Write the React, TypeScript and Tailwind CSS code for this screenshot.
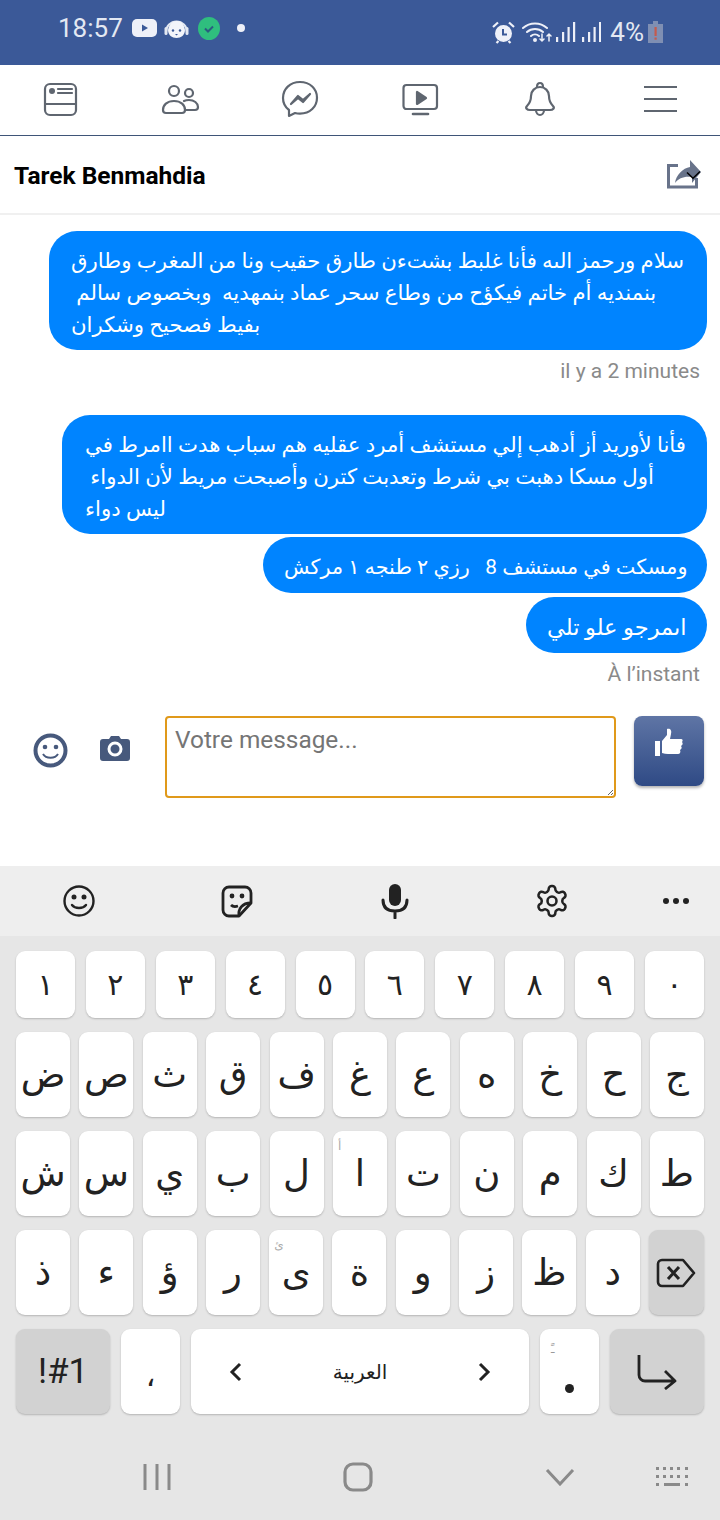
import { ReactNode } from "react";

const row1 = ["١", "٢", "٣", "٤", "٥", "٦", "٧", "٨", "٩", "٠"];
const row2 = ["ض", "ص", "ث", "ق", "ف", "غ", "ع", "ه", "خ", "ح", "ج"];
const row3 = ["ش", "س", "ي", "ب", "ل", "ا", "ت", "ن", "م", "ك", "ط"];
const row4 = ["ذ", "ء", "ؤ", "ر", "ى", "ة", "و", "ز", "ظ", "د"];

const hints: Record<string, string> = { "ا": "أ", "ى": "ئ" };

function Key({ label }: { label: string }) {
  return (
    <div className="relative flex h-[85px] w-[54px] items-center justify-center rounded-[9px] bg-white text-[37px] leading-none text-[#222] shadow-[0_1px_2px_rgba(0,0,0,0.22)]">
      {hints[label] && <span className="absolute left-[5px] top-[9px] text-[12px] text-[#aaa]">{hints[label]}</span>}
      {label}
    </div>
  );
}

function Bubble({ lines, className }: { lines: string[]; className: string }) {
  return (
    <div className={`flex flex-col justify-center rounded-[28px] bg-[#0084ff] pt-[4px] leading-[32px] text-white ${className}`}>
      {lines.map((l, i) => (
        <div key={i} dir="rtl" className="w-fit whitespace-pre">
          {l}
        </div>
      ))}
    </div>
  );
}

function NavIcon({ children }: { children: ReactNode }) {
  return (
    <svg width="40" height="40" viewBox="0 0 40 40" fill="none" stroke="#5f6670" strokeWidth="2.200" strokeLinecap="round" strokeLinejoin="round">
      {children}
    </svg>
  );
}

export default function App() {
  return (
    <div className="flex h-[1520px] w-[720px] flex-col overflow-hidden bg-white font-['Roboto','DejaVu_Sans',sans-serif]">
      {/* status bar */}
      <div className="flex h-[65px] shrink-0 items-start bg-[#3b5998] pl-[58px] pr-[57px] pt-[12px] text-[#e3e8f2]">
        <span className="text-[26px] leading-[32px]">18:57</span>
        <div className="ml-[9px] mt-[4px] flex items-center">
          <svg width="25" height="24" viewBox="0 0 25 24">
            <rect x="0" y="3" width="25" height="18" rx="5" fill="#eef0f8" />
            <path d="M10 8.500v7l6-3.500z" fill="#3b5998" />
          </svg>
          <svg className="ml-[7px]" width="25" height="24" viewBox="0 0 25 24">
            <path d="M2 16A10.500 10.500 0 0 1 23 16" fill="none" stroke="#e3e8f2" strokeWidth="2" />
            <path d="M4 14c1-6 5-9 9-9s7 3 8 9c0 5-4 8-8.500 8S4 19 4 14z" fill="#f2f4fa" />
            <rect x="0.500" y="11" width="3" height="8" rx="1.500" fill="#e3e8f2" />
            <rect x="21.500" y="11" width="3" height="8" rx="1.500" fill="#e3e8f2" />
            <circle cx="9" cy="14.500" r="1.200" fill="#3b5998" />
            <circle cx="16" cy="14.500" r="1.200" fill="#3b5998" />
            <path d="M11 18h3l-1.500 1.500z" fill="#3b5998" />
          </svg>
          <svg className="ml-[9px]" width="22" height="23" viewBox="0 0 22 23">
            <ellipse cx="11" cy="11.500" rx="11" ry="11.500" fill="#2fbe7e" />
            <path d="M7 11.500l3 3 5-5" fill="none" stroke="#2a5c80" strokeWidth="2" />
          </svg>
          <span className="ml-[17px] h-[8px] w-[8px] rounded-full bg-[#eef0f8]" />
        </div>
        <div className="ml-auto mt-[4px] flex items-center">
          <svg width="23" height="23" viewBox="0 0 23 23">
            <circle cx="11.500" cy="12.500" r="8.500" fill="#eef0f8" />
            <path d="M11 8v5.500h4" fill="none" stroke="#3b5998" strokeWidth="2" />
            <path d="M1 6l5-4.500M22 6l-5-4.500M4.500 22l2-2M18.500 22l-2-2" stroke="#eef0f8" strokeWidth="2.200" />
          </svg>
          <svg className="ml-[7px]" width="30" height="22" viewBox="0 0 30 22" fill="none" stroke="#eef0f8" strokeWidth="2" strokeLinecap="round">
            <path d="M1 7a18 18 0 0 1 24 0M5 11a12 12 0 0 1 16 0M9 15a6 6 0 0 1 8 0" />
            <circle cx="13" cy="19" r="1" />
            <path d="M20 13v7M18 18l2 2 2-2M27 20v-7M25 15l2-2 2 2" strokeWidth="1.500" />
          </svg>
          <svg className="ml-[4px]" width="45" height="22" viewBox="0 0 45 22" fill="#eef0f8">
            <rect x="0" y="16" width="2.200" height="5" />
            <rect x="6" y="11" width="2.200" height="10" />
            <rect x="11.500" y="6" width="2.200" height="15" />
            <rect x="17" y="1" width="2.200" height="20" />
            <rect x="26" y="16" width="2.200" height="5" />
            <rect x="32" y="11" width="2.200" height="10" />
            <rect x="37.500" y="6" width="2.200" height="15" />
            <rect x="43" y="1" width="2.200" height="20" />
          </svg>
          <span className="ml-[9px] text-[26px] leading-[32px]">4%</span>
          <svg className="ml-[4px]" width="15" height="22" viewBox="0 0 15 22">
            <path d="M5 0h5v3h5v19H0V3h5z" fill="#7f8fb3" />
            <rect x="6.500" y="6" width="2.200" height="9" fill="#c55a4d" />
            <rect x="6.500" y="16.500" width="2.200" height="2.200" fill="#c55a4d" />
          </svg>
        </div>
      </div>

      {/* facebook nav */}
      <div className="flex h-[71px] shrink-0 items-center justify-between border-b border-[#3f5578] pb-[1px] pl-[40px] pr-[40px]">
        <NavIcon>
          <rect x="5" y="4" width="31" height="31" rx="5" />
          <path d="M5 24h31" />
          <circle cx="12" cy="11" r="3" fill="#5f6670" stroke="none" />
          <path d="M18 9h14M18 13h14" />
        </NavIcon>
        <NavIcon>
          <circle cx="14" cy="11" r="5" />
          <circle cx="29" cy="13" r="4" />
          <path d="M6 33a3 3 0 0 1-3-3c0-5 4-9 11-9s11 4 11 9a3 3 0 0 1-3 3z" />
          <path d="M24 21c2-1 4-1 5-1 5 0 9 3 9 7 0 2-1 3-3 3h-9" />
        </NavIcon>
        <NavIcon>
          <path d="M20 2C10 2 3 9 3 18c0 5 2 9 6 12v6l6-3c1.500 .5 3 .7 5 .7 10 0 17-7 17-16S30 2 20 2z" />
          <path d="M11 24l7-8 5 4 7-6-7 8-5-4z" fill="#5f6670" />
        </NavIcon>
        <NavIcon>
          <rect x="3.500" y="5" width="33.500" height="24" rx="3" />
          <path d="M17 12v12l9-6z" fill="#5f6670" />
          <path d="M13 34h15" strokeWidth="2.600" />
        </NavIcon>
        <NavIcon>
          <path d="M10 30c-3 0-5-2-3-4 3-3 4-6 4-10 0-5 4-9 9-9s9 4 9 9c0 4 1 7 4 10 2 2 0 4-3 4z" />
          <path d="M17 7c0-2 1-4 3-4s3 2 3 4M16 30c0 3 2 5 4 5s4-2 4-5" />
        </NavIcon>
        <NavIcon>
          <path d="M4 7h33M4 19h33M4 31h33" strokeLinecap="butt" />
        </NavIcon>
      </div>

      {/* conversation header */}
      <div className="flex h-[79px] shrink-0 items-center justify-between border-b-2 border-[#f0f0f0] pl-[14px] pr-[18px]">
        <span className="pt-[3px] text-[24.500px] font-bold leading-none text-black">Tarek Benmahdia</span>
        <svg width="36" height="32" viewBox="0 0 36 32">
          <path d="M12 6.500H2.500v21.500h28V19" fill="none" stroke="#68738a" strokeWidth="3" />
          <path d="M24 1l11 12-9 11v-6c-8-1-13 1-17 6 1-8 8-15 15-16z" fill="#68738a" />
          <path d="M21 13.500l6 5.800 7-6.800" fill="none" stroke="#000" strokeWidth="1.500" />
        </svg>
      </div>

      {/* messages */}
      <div className="flex flex-col items-end pr-[13px] pt-[16px]">
        <Bubble
          className="h-[119px] w-[658px] pl-[22px] text-[21.250px]"
          lines={[
            "سلام ورحمز الىه فأنا غلبط بشتءن طارق حقيب ونا من المغرب وطارق",
            " بنمنديه أم خاتم فيكؤح من وطاع سحر عماد بنمهديه  وبخصوص سالم ",
            "بفيط فصحيح وشكران",
          ]}
        />
        <span className="mr-[7px] mt-[9px] text-[21px] leading-[24px] text-[#8a8a8a]">il y a 2 minutes</span>
        <Bubble
          className="mt-[32px] h-[119px] w-[645px] pl-[23px] text-[21.250px]"
          lines={[
            "فأنا لأوريد أز أدهب إلي مستشف أمرد عقليه هم سباب هدت اامرط في",
            " أول مسكا دهبت بي شرط وتعدبت كترن وأصبحت مريط لأن الدواء ",
            "ليس دواء",
          ]}
        />
        <Bubble className="mt-[3px] h-[56px] w-[444px] pl-[21px] text-[20.800px]" lines={["ومسكت في مستشف 8   رزي ٢ طنجه ١ مركش"]} />
        <Bubble className="mt-[4px] h-[56px] w-[181px] pl-[21px] text-[22.500px]" lines={["اىمرجو علو تلي"]} />
        <span className="mr-[7px] mt-[9px] text-[21px] leading-[24px] text-[#8a8a8a]">À l’instant</span>
      </div>

      {/* composer */}
      <div className="mt-[30px] flex items-start pl-[33px]">
        <svg className="mt-[17px]" width="35" height="35" viewBox="0 0 35 35">
          <circle cx="17.500" cy="17.500" r="15" fill="#fff" stroke="#47597c" strokeWidth="4" />
          <circle cx="12" cy="14" r="2.300" fill="#47597c" />
          <circle cx="23" cy="14" r="2.300" fill="#47597c" />
          <path d="M10 21c3 5 12 5 15 0" fill="none" stroke="#47597c" strokeWidth="2" />
        </svg>
        <svg className="ml-[32px] mt-[20px]" width="30" height="25" viewBox="0 0 30 25">
          <path d="M3 3h6l2-3h8l2 3h6a3 3 0 0 1 3 3v16a3 3 0 0 1-3 3H3a3 3 0 0 1-3-3V6a3 3 0 0 1 3-3z" fill="#47597c" />
          <circle cx="15" cy="13" r="6" fill="none" stroke="#fff" strokeWidth="3" />
        </svg>
        <div className="relative ml-[35px] h-[82px] w-[451px] rounded-[4px] border-2 border-[#e0991a] px-[8px] py-[6px] text-[24.400px] leading-[32px] text-[#757575]">
          Votre message...
          <svg className="absolute bottom-0 right-0" width="7" height="7" viewBox="0 0 7 7" stroke="#666" strokeWidth="1">
            <path d="M1 6l5-5M4 6l2-2" />
          </svg>
        </div>
        <div className="ml-[18px] h-[70px] w-[70px] rounded-[8px] bg-gradient-to-b from-[#5f75a5] to-[#2f4a85] pl-[21px] pt-[12px] shadow-[0_2px_3px_rgba(0,0,0,0.3)]">
          <svg width="28" height="29" viewBox="0 0 28 29" fill="#fff">
            <rect x="0" y="13" width="5" height="15" />
            <path d="M7 13l5-6V1c3-1 5 1 4 5l-1 5h11c2 0 2 2 1 3 1 1 1 3-1 4 1 1 1 3-1 4 1 2 0 4-2 4H13c-2 0-4-.5-6-1z" />
          </svg>
        </div>
      </div>

      {/* keyboard */}
      <div className="mt-auto flex shrink-0 flex-col bg-[#e6e6e6]">
        <div className="flex h-[70px] items-center bg-[#eeeeee] pl-[62px]">
          <svg width="34" height="34" viewBox="0 0 34 34" fill="none" stroke="#222" strokeWidth="2.400">
            <circle cx="17" cy="17" r="14.500" />
            <circle cx="12" cy="13" r="1.300" fill="#222" />
            <circle cx="22" cy="13" r="1.300" fill="#222" />
            <path d="M10 21c3 4 11 4 14 0" strokeLinecap="round" />
          </svg>
          <svg className="ml-[124px]" width="34" height="34" viewBox="0 0 34 34" fill="none" stroke="#222" strokeWidth="2.800" strokeLinejoin="round">
            <path d="M19 32H9a6 6 0 0 1-6-6V9a6 6 0 0 1 6-6h16a6 6 0 0 1 6 6v10z" />
            <path d="M19 32c-1-7 3-13 12-13" />
            <path d="M11 21c2 2 4 2 7 1" />
            <circle cx="12" cy="12" r="1" fill="#222" />
            <circle cx="22" cy="12" r="1" fill="#222" />
          </svg>
          <svg className="ml-[126px]" width="30" height="36" viewBox="0 0 30 36" fill="none" stroke="#222" strokeWidth="3" strokeLinecap="round">
            <rect x="9" y="1" width="12" height="22" rx="6" fill="#222" stroke="none" />
            <path d="M3 17c0 8 5 11 12 11s12-3 12-11M15 28v7" />
          </svg>
          <svg className="ml-[124px]" width="36" height="36" viewBox="0 0 24 24" fill="none" stroke="#222" strokeWidth="1.700" strokeLinejoin="round">
            <path d="M12.220 2h-.44a2 2 0 0 0-2 2v.18a2 2 0 0 1-1 1.730l-.43.250a2 2 0 0 1-2 0l-.150-.080a2 2 0 0 0-2.730.730l-.220.380a2 2 0 0 0 .730 2.730l.150.100a2 2 0 0 1 1 1.720v.510a2 2 0 0 1-1 1.740l-.150.090a2 2 0 0 0-.730 2.730l.220.380a2 2 0 0 0 2.730.730l.150-.080a2 2 0 0 1 2 0l.430.250a2 2 0 0 1 1 1.730V20a2 2 0 0 0 2 2h.44a2 2 0 0 0 2-2v-.18a2 2 0 0 1 1-1.730l.43-.250a2 2 0 0 1 2 0l.150.080a2 2 0 0 0 2.730-.730l.220-.390a2 2 0 0 0-.730-2.730l-.150-.080a2 2 0 0 1-1-1.740v-.500a2 2 0 0 1 1-1.740l.150-.090a2 2 0 0 0 .730-2.730l-.220-.380a2 2 0 0 0-2.730-.730l-.150.080a2 2 0 0 1-2 0l-.430-.250a2 2 0 0 1-1-1.730V4a2 2 0 0 0-2-2z" />
            <circle cx="12" cy="12" r="3" />
          </svg>
          <svg className="ml-[92px]" width="28" height="8" viewBox="0 0 28 8" fill="#222">
            <circle cx="4" cy="4" r="3" />
            <circle cx="14" cy="4" r="3" />
            <circle cx="24" cy="4" r="3" />
          </svg>
        </div>

        <div className="flex h-[584px] flex-col gap-[14px] px-[16px] pt-[15px]">
          <div className="flex justify-between">
            {row1.map((k) => (
              <div key={k} className="flex h-[67px] w-[59px] items-center justify-center rounded-[9px] bg-white text-[30px] leading-none text-[#222] shadow-[0_1px_2px_rgba(0,0,0,0.22)]">
                {k}
              </div>
            ))}
          </div>
          <div className="flex justify-between">
            {row2.map((k) => (
              <Key key={k} label={k} />
            ))}
          </div>
          <div className="flex justify-between">
            {row3.map((k) => (
              <Key key={k} label={k} />
            ))}
          </div>
          <div className="flex justify-between">
            {row4.map((k) => (
              <Key key={k} label={k} />
            ))}
            <div className="flex h-[85px] w-[55px] items-center justify-center rounded-[9px] bg-[#d2d2d2] shadow-[0_1px_2px_rgba(0,0,0,0.22)]">
              <svg width="40" height="30" viewBox="0 0 40 30" fill="none" stroke="#222" strokeWidth="2.600" strokeLinejoin="round">
                <path d="M6 2h21l11 13-11 13H6a4 4 0 0 1-4-4V6a4 4 0 0 1 4-4z" />
                <path d="M12 9l11 12M23 9L12 21" strokeWidth="3" />
              </svg>
            </div>
          </div>
          <div className="flex justify-between">
            <div className="flex h-[85px] w-[94px] items-center justify-center rounded-[9px] bg-[#d2d2d2] text-[35px] leading-none text-[#222] shadow-[0_1px_2px_rgba(0,0,0,0.22)]">
              !#1
            </div>
            <div className="flex h-[85px] w-[59px] items-center justify-center rounded-[9px] bg-white pt-[8px] text-[30px] leading-none text-[#222] shadow-[0_1px_2px_rgba(0,0,0,0.22)]">
              ،
            </div>
            <div className="flex h-[85px] w-[338px] items-center justify-between rounded-[9px] bg-white px-[38px] text-[#222] shadow-[0_1px_2px_rgba(0,0,0,0.22)]">
              <svg width="14" height="20" viewBox="0 0 14 20" fill="none" stroke="#222" strokeWidth="3">
                <path d="M11 2L3 10l8 8" />
              </svg>
              <span className="text-[20px] leading-none">العربية</span>
              <svg width="14" height="20" viewBox="0 0 14 20" fill="none" stroke="#222" strokeWidth="3">
                <path d="M3 2l8 8-8 8" />
              </svg>
            </div>
            <div className="relative flex h-[85px] w-[59px] items-center justify-center rounded-[9px] bg-white text-[#222] shadow-[0_1px_2px_rgba(0,0,0,0.22)]">
              <span className="absolute left-[11px] top-[11px] text-[12px] text-[#999]">ـً</span>
              <span className="mt-[34px] h-[9px] w-[9px] rounded-full bg-[#222]" />
            </div>
            <div className="flex h-[85px] w-[94px] items-center justify-center rounded-[9px] bg-[#d2d2d2] shadow-[0_1px_2px_rgba(0,0,0,0.22)]">
              <svg width="40" height="36" viewBox="0 0 40 36" fill="none" stroke="#222" strokeWidth="2.800" strokeLinejoin="round">
                <path d="M2 1v20a6 6 0 0 0 6 6h29M28 17l10 10-10 8" />
              </svg>
            </div>
          </div>

          {/* system nav */}
          <div className="mt-[34px] flex items-center">
            <svg className="ml-[127px]" width="28" height="28" viewBox="0 0 28 28" stroke="#8a8a8a" strokeWidth="3">
              <path d="M2 1v26M14 1v26M26 1v26" />
            </svg>
            <svg className="ml-[172px]" width="30" height="30" viewBox="0 0 30 30" fill="none" stroke="#8a8a8a" strokeWidth="3.200">
              <rect x="2" y="2" width="26" height="26" rx="8" />
            </svg>
            <svg className="ml-[172px]" width="30" height="18" viewBox="0 0 30 18" fill="none" stroke="#8a8a8a" strokeWidth="3">
              <path d="M2 2l13 14L28 2" />
            </svg>
            <svg className="ml-[81px]" width="34" height="22" viewBox="0 0 34 22" fill="#8a8a8a">
              <rect x="0" y="1" width="3" height="3" />
              <rect x="7" y="1" width="3" height="3" />
              <rect x="14" y="1" width="3" height="3" />
              <rect x="21" y="1" width="3" height="3" />
              <rect x="29" y="1" width="3" height="3" />
              <rect x="0" y="9" width="3" height="3" />
              <rect x="7" y="9" width="3" height="3" />
              <rect x="14" y="9" width="3" height="3" />
              <rect x="21" y="9" width="3" height="3" />
              <rect x="29" y="9" width="3" height="3" />
              <rect x="0" y="17" width="3" height="3" />
              <rect x="8" y="17" width="16" height="3" />
              <rect x="29" y="17" width="3" height="3" />
            </svg>
          </div>
        </div>
      </div>
    </div>
  );
}
